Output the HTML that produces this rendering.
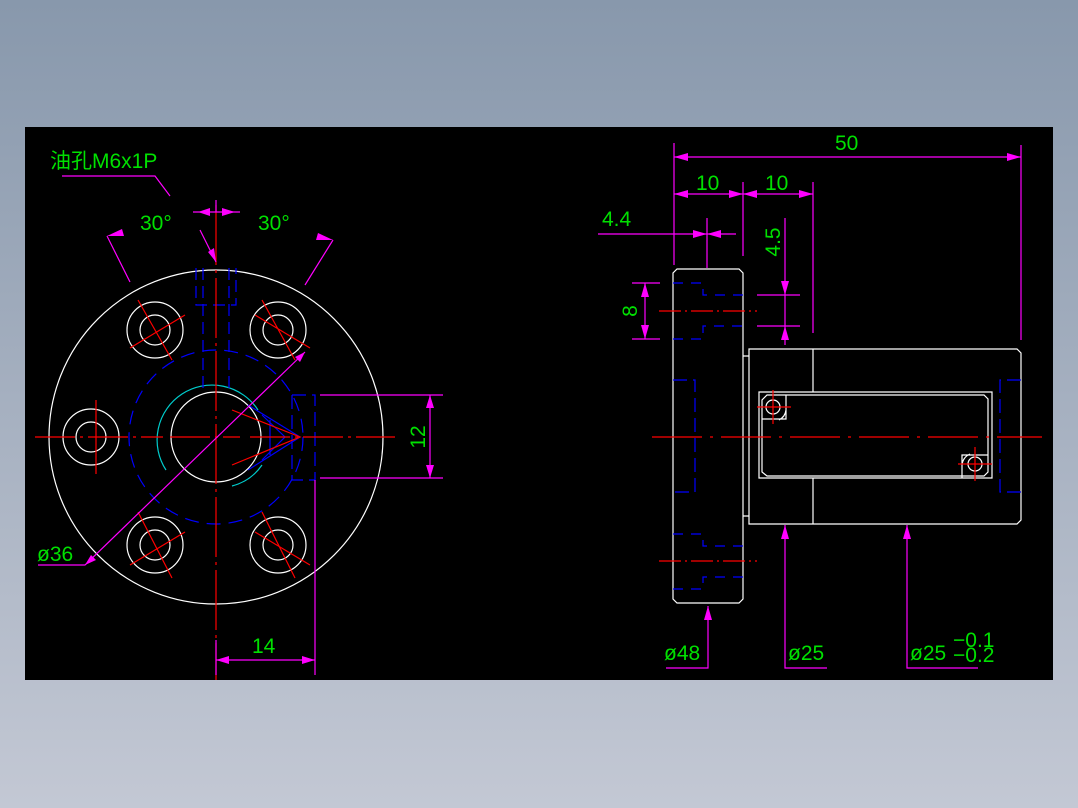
<!DOCTYPE html>
<html><head><meta charset="utf-8"><style>
html,body{margin:0;padding:0;width:1078px;height:808px;overflow:hidden;background:linear-gradient(#8898ac,#c3c8d4);}
svg{position:absolute;left:0;top:0}
text{font-family:"Liberation Sans","Noto Sans CJK SC",sans-serif;fill:#00e000;font-size:21px}
</style></head><body>
<svg width="1078" height="808" viewBox="0 0 1078 808">
<rect x="25" y="127" width="1028" height="553" fill="#000"/>
<g fill="none" stroke-width="1.2">
<g stroke="#fff">
<circle cx="216" cy="437" r="167"/>
<circle cx="216" cy="437" r="45"/>
<circle cx="155" cy="330" r="28"/><circle cx="155" cy="330" r="15"/>
<circle cx="278" cy="330" r="28"/><circle cx="278" cy="330" r="15"/>
<circle cx="91" cy="437" r="28"/><circle cx="91" cy="437" r="15"/>
<circle cx="155" cy="545" r="28"/><circle cx="155" cy="545" r="15"/>
<circle cx="278" cy="545" r="28"/><circle cx="278" cy="545" r="15"/>
</g>
<path d="M166 470 A52 52 0 0 1 258 410 M262 465 A52 52 0 0 1 232 486" stroke="#0cc"/>
<circle cx="216" cy="437" r="87" stroke="#00f" stroke-dasharray="14,8"/>
<g stroke="#00f">
<path d="M196 268 V305 H236 V268 M203 268V390 M229 268V390" stroke-dasharray="12,6"/>
<path d="M292 395 H315 V480 H292 M292 395V480" stroke-dasharray="14,6"/>
<path d="M248 405 L300 437 L248 470 M262 415 L285 437 L262 460 M270 420 V455"/>
</g>
<g stroke="#f00">
<path d="M35 437 H163 M170 437 H240 M250 437H395" stroke-dasharray="40,5,3,5"/>
<path d="M216 205 V680" stroke-dasharray="60,5,3,5"/>
<path d="M232 410 L300 437 L232 465"/>
<path d="M138 300 L172 360 M130 348 L185 315 M262 300 L295 360 M255 315 L310 348 M96 400 V474 M138 512 L172 578 M130 565 L185 532 M262 512 L295 578 M255 532 L310 565"/>
</g>
<g stroke="#f0f">
<path d="M320 395 H443 M320 478 H443 M430 395 V478"/>
<path d="M216 640 V675 M315 480 V675 M216 660 H315"/>
<path d="M305 352 L85 565 H38"/>
<path d="M62 176 H155 L170 196"/>
<path d="M200 230 L216 262"/>
<path d="M107 236 L130 282 M333 240 L305 285 M193 212 H240 M216 200 V212"/>
</g>
<g fill="#f0f" stroke="none">
<polygon points="430,395 426,408 434,408"/><polygon points="430,478 426,465 434,465"/>
<polygon points="216,660 229,656 229,664"/><polygon points="315,660 302,656 302,664"/>
<polygon points="305,352 300,362 295,357"/><polygon points="85,565 91,555 96,560"/>
<polygon points="216,262 208,252 214,248"/>
<polygon points="107,236 122,229 124,236"/><polygon points="333,240 318,233 316,240"/>
<polygon points="198,212 210,208 210,216"/><polygon points="235,212 222,208 222,216"/>
</g>
<g stroke="#fff">
<path d="M677 269 H739 L743 273 V599 L739 603 H677 L673 599 V273 Z"/>
<path d="M749 349 H1017 L1021 353 V520 L1017 524 H749 Z"/>
<path d="M743 356 H749 M743 516 H749"/>
<path d="M759 392 H992 V478 H759 Z"/>
<path d="M767 395 H984 L988 399 V472 L984 476 H767 L762 472 V400 Z"/>
<path d="M813 349 V392 M813 478 V524"/>
<path d="M762 419 H786 V395 M786 410 A13 13 0 0 1 779 420 M988 455 H962 V478 M962 465 A13 13 0 0 1 970 454"/>
<circle cx="773" cy="407" r="7"/><circle cx="975" cy="464" r="7"/>
</g>
<g stroke="#00f">
<path d="M673 283 H703 V295 H743 M673 339 H703 V326 H743" stroke-dasharray="10,8"/>
<path d="M673 534 H703 V546 H743 M673 589 H703 V577 H743" stroke-dasharray="10,8"/>
<path d="M673 380 H695 V492 H673" stroke-dasharray="14,6"/>
<path d="M1021 380 H1000 V492 H1021" stroke-dasharray="14,6"/>
</g>
<g stroke="#f00">
<path d="M652 437 H1042" stroke-dasharray="50,8,3,8"/>
<path d="M659 311 H757 M659 561 H757" stroke-dasharray="22,4,2,4"/>
<path d="M757 407 H791 M773 390 V424 M958 464 H992 M975 447 V481"/>
</g>
<g stroke="#f0f">
<path d="M674 143 V265 M1021 145 V340 M674 157 H1021"/>
<path d="M743 182 V256 M813 182 V333 M674 194 H813"/>
<path d="M598 234 H736 M707 218 V268"/>
<path d="M785 218 V345 M757 295 H800 M757 326 H800"/>
<path d="M632 283 H660 M632 339 H660 M645 283 V339"/>
<path d="M708 606 V668 H666 M785 525 V668 H827 M907 525 V668 H978"/>
</g>
<g fill="#f0f" stroke="none">
<polygon points="674,157 688,153 688,161"/><polygon points="1021,157 1007,153 1007,161"/>
<polygon points="674,194 688,190 688,198"/><polygon points="743,194 729,190 729,198"/><polygon points="743,194 757,190 757,198"/><polygon points="813,194 799,190 799,198"/>
<polygon points="707,234 693,230 693,238"/><polygon points="707,234 721,230 721,238"/>
<polygon points="785,295 781,281 789,281"/><polygon points="785,326 781,340 789,340"/>
<polygon points="645,283 641,297 649,297"/><polygon points="645,339 641,325 649,325"/>
<polygon points="708,606 704,620 712,620"/><polygon points="785,525 781,539 789,539"/><polygon points="907,525 903,539 911,539"/>
</g>
</g>
<text x="50" y="168">油孔M6x1P</text>
<text x="140" y="230">30°</text>
<text x="258" y="230">30°</text>
<text x="37" y="561">ø36</text>
<text x="252" y="653">14</text>
<text transform="translate(425,437) rotate(-90)" text-anchor="middle">12</text>
<text x="835" y="150">50</text>
<text x="696" y="190">10</text>
<text x="765" y="190">10</text>
<text x="602" y="226">4.4</text>
<text transform="translate(780,242) rotate(-90)" text-anchor="middle">4.5</text>
<text transform="translate(637,311) rotate(-90)" text-anchor="middle">8</text>
<text x="664" y="660">ø48</text>
<text x="788" y="660">ø25</text>
<text x="910" y="660">ø25</text>
<text x="953" y="647" font-size="10">−0.1</text>
<text x="953" y="662" font-size="10">−0.2</text>
</svg>
</body></html>
